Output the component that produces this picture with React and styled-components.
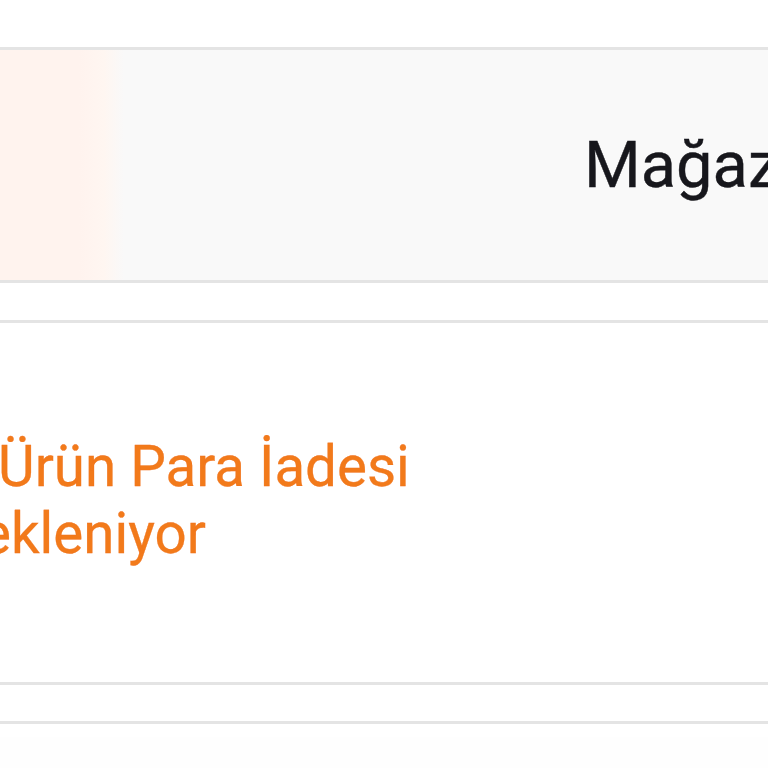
import React from 'react';
import styled, { createGlobalStyle } from 'styled-components';

const GlobalStyle = createGlobalStyle`
  html, body {
    margin: 0;
    padding: 0;
    background: #ffffff;
    overflow: hidden;
  }
  body {
    font-family: Roboto, "Noto Sans", "Liberation Sans", sans-serif;
  }
`;

const Page = styled.div`
  width: 768px;
  height: 768px;
  overflow: hidden;
  display: flex;
  flex-direction: column;
  background: #ffffff;
`;

const Spacer = styled.div`
  height: ${(p) => p.$h}px;
  flex-shrink: 0;
  background: ${(p) => p.$bg || '#ffffff'};
`;

const Rule = styled.div`
  height: 3px;
  flex-shrink: 0;
  background: #e4e4e4;
`;

const HeaderPanel = styled.div`
  height: 230px;
  flex-shrink: 0;
  display: flex;
  align-items: center;
  background: #f9f9f9;
`;

const SelectedCell = styled.div`
  width: 124px;
  align-self: stretch;
  flex-shrink: 0;
  background: linear-gradient(
    to right,
    #fff3ee 0%,
    #fff3ee 64%,
    #fff6f1 84%,
    #f9f9f9 100%
  );
`;

const HeaderLabel = styled.div`
  margin-left: 460px;
  font-size: 65px;
  line-height: 75px;
  color: #17171c;
  white-space: nowrap;
  -webkit-text-stroke: 0.4px #17171c;
`;

const ContentRow = styled.div`
  height: 359px;
  flex-shrink: 0;
  display: flex;
  flex-direction: column;
  padding-top: 111px;
  box-sizing: border-box;
  background: #ffffff;
  overflow: hidden;
`;

const StatusLine = styled.div`
  font-size: 56.5px;
  line-height: 67px;
  color: #f27a1a;
  white-space: nowrap;
  margin-left: ${(p) => p.$shift}px;
  -webkit-text-stroke: 0.3px #f07020;
`;

export default function App() {
  return (
    <Page>
      <GlobalStyle />
      <Spacer $h={47} />
      <Rule />
      <HeaderPanel>
        <SelectedCell />
        <HeaderLabel>Mağaza</HeaderLabel>
      </HeaderPanel>
      <Rule />
      <Spacer $h={37} />
      <Rule />
      <ContentRow>
        <StatusLine $shift={-2}>Ürün Para İadesi</StatusLine>
        <StatusLine $shift={-19}>ekleniyor</StatusLine>
      </ContentRow>
      <Rule />
      <Spacer $h={36} />
      <Rule />
      <Spacer $h={13} />
      <Spacer $h={40} $bg="#fefefe" />
    </Page>
  );
}
